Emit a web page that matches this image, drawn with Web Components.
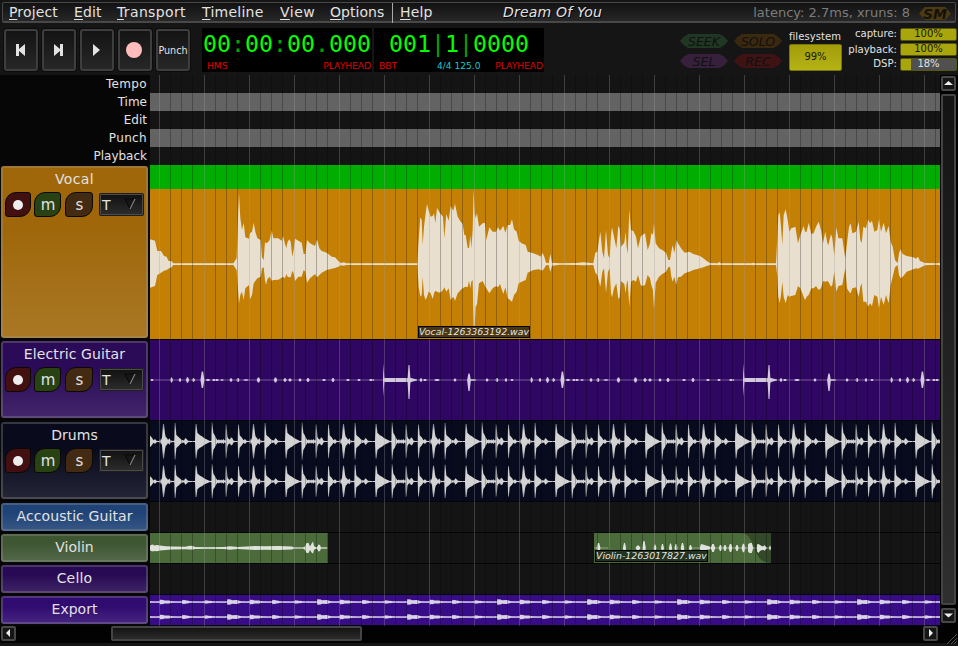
<!DOCTYPE html>
<html lang="en"><head><meta charset="utf-8"><title>Dream Of You</title>
<style>
html,body{margin:0;width:958px;height:646px;overflow:hidden;background:#151515}
body{font-family:"DejaVu Sans",sans-serif;color:#e2e2e2}
</style></head><body><daw-app></daw-app>
<script>
const def=(name,css,html)=>customElements.define(name,class extends HTMLElement{
  connectedCallback(){
    if(this.shadowRoot)return;
    const r=this.attachShadow({mode:'open'});
    const t=document.createElement('template');
    t.innerHTML='<style>*{box-sizing:border-box}:host{box-sizing:border-box;display:block}'+css+'</style>'+(typeof html==='function'?html(this):html);
    r.appendChild(t.content.cloneNode(true));
  }
});

/* ---------- waveform envelopes ---------- */
const quad=(ox,s)=>s.trim().split(/\s+/).map(p=>{const[x,t,b]=p.split(',').map(Number);return[x/3+ox,(t-252)/3,(b-252)/3]});
const vocal=[
...quad(0,`0,178,323 15,182,318 22,213,285 33,213,278 42,228,272 50,230,270 55,242,266 65,244,262 70,250,255 250,250,255 260,235,270 264,110,330 267,40,370 271,115,345 276,150,335 281,128,360 286,172,325 297,176,315 300,160,358 306,155,345 311,128,310 316,155,303 322,175,295 332,180,290 336,232,265 341,240,262 345,185,300 348,190,315 352,188,298 359,180,290 365,150,303 370,175,300 385,175,299 395,182,293 399,168,290 405,192,295 409,204,282 413,185,290 418,178,292 422,185,292 427,230,272 431,210,280 435,176,303 445,182,290 455,188,290 461,222,270 466,222,275 471,180,308 480,190,295 495,198,282 501,178,292 508,205,285 515,213,278 530,218,270 545,230,266 555,232,264 565,243,260 573,249,256 582,247,257 588,250,255`),
...quad(260,`22,250,255 26,180,320 31,112,350 35,120,345 38,195,290 42,140,345 47,100,360 51,72,350 56,92,335 62,110,340 68,108,357 72,100,340 76,130,332 81,84,335 90,100,338 99,110,330 103,175,322 109,102,335 116,122,325 122,78,360 130,92,350 135,72,362 143,110,340 152,125,330 158,132,325 163,165,322 167,165,320 173,203,322 177,205,303 181,165,325 184,205,305 188,150,300 191,30,440 194,100,440 197,115,380 201,100,372 207,140,310 218,130,303 225,128,318 229,180,325 238,142,340 248,155,325 258,155,318 264,142,322 270,152,312 280,138,342 286,158,322 293,135,355 300,135,360 306,118,365 312,148,345 320,155,335 326,182,310 335,190,305 347,195,300 353,215,278 370,220,270 385,226,268 393,230,270 397,218,272 403,230,265 408,248,256 416,250,255 421,222,275 426,248,257 450,250,254 500,249,255 520,247,256 550,250,255 556,218,278 562,215,285 567,180,305 571,155,320 577,215,275 582,235,265 588,150,338 594,225,275 599,235,265 603,165,340 606,142,352 612,170,325 619,205,310 625,138,358 629,145,352 633,200,303 643,188,312 647,155,340 650,200,310 653,222,300 658,90,380 663,150,305 670,153,300 678,170,305 684,205,285 692,170,315 697,165,318 705,160,315 713,210,285 720,190,295 724,158,315 729,165,330 732,130,388 737,190,308 747,205,290 757,210,282 768,218,275 775,240,262 780,240,260 784,215,290 788,195,305 793,220,290`),
...quad(520,`19,180,315 24,190,292 33,205,290 44,218,280 58,215,275 70,222,270 90,228,265 100,235,262 110,243,258 120,249,255 143,250,255 148,246,256 152,250,255 245,250,255 250,248,256 254,250,255 318,250,255 322,170,290 325,105,350 329,97,370 333,140,345 337,195,305 341,105,350 347,88,370 353,120,345 358,155,350 364,145,348 376,140,345 384,190,318 391,165,325 401,138,350 405,155,360 410,155,350 416,128,345 424,162,325 431,160,325 438,140,318 446,125,330 453,150,325 459,190,303 466,155,305 472,190,303 475,195,305 483,162,320 487,175,315 493,228,275 499,142,335 505,175,318 517,175,315 522,210,285 526,235,265 531,190,325 537,140,335 542,130,340 547,160,325 558,155,322 566,125,350 571,180,320 575,190,310 580,140,365 588,145,365 594,118,380 600,130,370 606,122,378 613,155,345 622,150,350 627,118,385 633,155,350 641,128,375 648,160,345 656,138,370 662,185,315 668,200,290 675,240,262 683,250,255 687,220,285 692,208,295 698,222,290 710,228,275 730,232,268 738,236,265 744,230,266 750,243,263 765,249,256 800,250,254 810,249,256`)];
const poly=(pts,cy)=>'M'+pts.map(p=>p[0].toFixed(2)+' '+(cy+p[1]).toFixed(2)).join('L')+'L'+pts.slice().reverse().map(p=>p[0].toFixed(2)+' '+(cy+p[2]).toFixed(2)).join('L')+'Z';
const blip=(x,up,dn,w,cy)=>`M${x-w} ${cy}L${x-w/3} ${cy-up}L${x+w/3} ${cy-up}L${x+w} ${cy}L${x+w/3} ${cy+dn}L${x-w/3} ${cy+dn}Z`;

const drumCycle=(cy,k)=>{
  const e=`10.4,3 11,1.4 12,4 13,18 14,18 15,8 15.8,4.6 17,3.5 18,1.6 19.5,3.3 20.5,1.2 22.5,.6 24.3,.8 24.7,19 25.5,19 26.3,7 27.6,5.4 29,4.4 30,3 32,1.5 34,1 35.3,3.7 36.6,2.5 38,.9 41,.6 45,.6 45.6,18 46.6,18 47.4,9 50,6.5 52,5.5 54,3.6 57,2 60,.5 61.4,.8 61.8,20 62.5,19 63.3,9 65,6 66.2,3.4 67.5,1.4 69,2.3 70,1 71.3,2.3 72,1 73.5,2.5 74.5,1 75.4,1.2 75.8,18 76.6,17 77.4,5 78.6,2.5 80,2 81,4.3 82.6,3.2 83.4,1 85,.6 87.6,.6 88.1,18 88.9,17 89.7,6.5 92,3.8 93.5,1.2 95,2.5 96.5,.8 98,.5 98.8,.6 99.5,2`.split(' ').map(p=>p.split(',').map(Number));
  let d='';
  for(let o=-90;o<800;o+=90)d+=poly(e.map(([x,h])=>[x+o,-Math.max(h*k,.4),Math.max(h*k*.98,.4)]),cy);
  return d;
};
const guitar=cy=>{
  let d='';
  const ev=[[373,.8,.8,1.5],[409,15,19,1.5],[421,1.8,1.8,1.6],[425,.9,.9,2],[437,1,1,3],[455,1.5,1.5,1.5],[469,6.5,11,1.9],[473,.8,.8,4],[487,1.4,1.4,1.7],[497,2,2,1.5],[506,1.8,1.8,1.4],[512,1,1,1.6],[531.5,2.5,2.5,1.5],[540,1.8,1.8,1.5],[547.5,2.7,2.7,1.7],[553.5,1.8,1.8,1.7],[562.4,8.5,8,2],[568,1.1,1.1,2.4],[574,1,1,2],[577,1,1,2],[582,.8,.8,2],[591,1.8,1.8,1.6],[598,1.9,1.9,1.6],[606,.8,.8,3],[618.5,2.5,2.5,1.9],[635.5,2.5,2.5,1.8],[645,1.8,1.8,1.8],[650,1.5,1.5,1.8],[660,1.6,1.6,1.6],[668,2,2,1.7],[684,1,1,2],[693,1.9,1.9,1.7],[708,1.1,1.1,2],[719,1.1,1.1,1.8],[731,1,1,2]];
  for(let o=-360;o<=360;o+=360){
    for(const[x,a,b,w]of ev)d+=blip(x-150+o,a,b,w,cy);
    d+=poly([[233,-.6,.6],[233.5,-17,17],[234,-7,7],[234.4,-2,2],[258,-2,2],[259,-3,3.5],[262,-1.8,1.8],[266,-.8,.8],[267,-.4,.4]].map(p=>[p[0]+o,p[1],p[2]]),cy);
  }
  return d;
};
const exportWave=cy=>{
  let d='';
  for(let o=-125.5;o<800;o+=90)for(const[x,h,w]of[[0,1.8,8],[22.5,3.1,14],[45,2.4,13],[67.5,2.2,8]])
    d+=poly([[x-2,-.7,.7],[x,-.7,.7],[x+.5,-h,h],[x+2,-h*.8,h*.8],[x+3,-h*.9,h*.9],[x+5,-h*.6,h*.6],[x+w*.7,-h*.65,h*.65],[x+w,-.8,.8],[x+22,-.5,.5]].map(p=>[p[0]+o,p[1],p[2]]),cy);
  return d;
};
const trail=(fill,cy,w=790,x=0)=>`<rect x="${x}" y="${cy-.5}" width="${w}" height="1" fill="${fill}" opacity=".45"/>`;
const svg=(h,s)=>`<svg width="790" height="${h}" viewBox="0 0 790 ${h}">${s}</svg>`;
const waves={
  vocal:()=>svg(150,`<path fill="#e8dfcf" d="${poly(vocal,75)}"/>`),
  guitar:()=>svg(80,trail('#c8bcd8',40)+`<path fill="#d2c9de" d="${guitar(40)}"/>`),
  drums:()=>svg(80,`<defs><linearGradient id="g" x1="0" y1="0" x2="0" y2="40" gradientUnits="userSpaceOnUse" spreadMethod="repeat"><stop offset="0" stop-color="#d2d2d2" stop-opacity=".4"/><stop offset=".25" stop-color="#d2d2d2"/><stop offset=".75" stop-color="#d2d2d2"/><stop offset="1" stop-color="#d2d2d2" stop-opacity=".4"/></linearGradient></defs>`+trail('#ccc',20.5)+trail('#ccc',60.5)+`<path fill="url(#g)" d="${drumCycle(20.5,.97)}${drumCycle(60.5,.88)}"/>`),
  export:()=>svg(30,trail('#d9d0ee',7)+trail('#d9d0ee',22)+`<path fill="#d9d2e6" d="${exportWave(7)}${exportWave(22)}"/>`),
  violin:()=>{
    const a=[[0,-2,2],[1,-3,3],[3,-3.5,3.5],[4,-2.5,3],[7,-3,3.2],[10,-2.4,2.6],[16,-1.8,2],[22,-1.4,1.5],[35,-1.2,1.2],[40,-2.2,1.4],[43,-2,1.4],[45,-1,1],[58,-.8,.8],[74,-1,1],[80,-1.7,1.7],[88,-1,1],[97,-1.4,1.6],[105,-2,2],[115,-1.8,1.8],[128,-2,2],[142,-1.6,1.6],[144,-.5,.5],[153,-.4,.4],[155,-1.5,2],[156.5,-5,5],[158.5,-5,5],[160,-1.5,2],[162,-5,5],[163,-6.5,5.5],[164,-2,2],[165,-1,1],[167,-.8,.8],[168.5,-3.5,3.5],[170,-3,3],[171,-.5,.5],[177,-.4,.4]];
    let d=poly(a,15);
    for(const[x,h,w]of[[598.5,5,2],[624.5,5,1.6],[638,2.5,2.5],[644,7,1.8],[655,3.5,1.4],[662.5,4,1.5],[670.5,4.5,1.6],[676,4,1.5],[682.5,5,1.8],[690.5,3,1.6],[713,4,2.3],[720.5,3,1.8],[725,3,1.7],[730.5,4,2],[737,3,1.8],[743.5,4.2,2],[751,5,2.3],[764.5,2.5,1.8],[770,2.3,1]])d+=blip(x-150,h,h,w,15);
    d+=poly([[550,-1,1],[551,-4,4],[553,-3.6,4],[556,-2.4,2],[559,-1.8,1.5],[561,-.5,.5]],15)+poly([[598,-3.5,3.5],[599.5,-5,5],[601.5,-3.5,3.5],[603,-.5,.5]],15)+poly([[607,-3.5,3.5],[608.5,-4,5],[610,-3,3],[612,-1.8,2],[615,-1.8,2],[617,-.5,.5]],15);
    return svg(30,`<path fill="#4c6b3b" d="M0 0H178V30H0ZM444 0H621V30H444Z"/><path fill="#33492a" d="M590 0C608 0 600 30 621 30V0Z"/>`+trail('#dde3d8',15,178)+trail('#dde3d8',15,14,444)+trail('#dde3d8',15,80,541)+`<path fill="#e0e3dc" d="${d}"/>`);
  }
};

/* ---------- menu and transport ---------- */
def('menu-item',`:host{position:relative;width:var(--w);font-size:14px;letter-spacing:var(--ls,.15px);line-height:19px;white-space:nowrap}u{text-decoration-thickness:1px;text-underline-offset:2px;text-decoration-skip-ink:none}:host([divided])::before{content:"";position:absolute;left:-8px;top:0;height:20px;width:1px;background:#aaa}`,
  e=>`<u>${e.getAttribute('label')[0]}</u>${e.getAttribute('label').slice(1)}`);
def('menu-bar',`:host{display:flex;height:21px;margin:2px 2px 0 2px;padding:0 4px 0 6px;border:1px solid #484848;border-width:1px 1px 2px;border-radius:2px;background:linear-gradient(#121212,#272727);position:relative;width:954px}
.title{font-size:14px;line-height:19px;font-style:italic;margin-left:53px;letter-spacing:.2px;width:101px;white-space:nowrap;text-shadow:1px 1px 0 #000}.lat{margin-left:auto;font-size:13px;line-height:20px;color:#7c7c7c;white-space:nowrap}.sm{margin-left:9px;margin-top:4px;width:32px;height:13px;background:#4c3a12;clip-path:polygon(0 50%,18% 0,82% 0,100% 50%,82% 100%,18% 100%);color:#15120a;font:italic bold 14px/14px "DejaVu Sans";text-align:center}`,
`<menu-item label="Project" style="--w:65px"></menu-item><menu-item label="Edit" style="--w:43px"></menu-item><menu-item label="Transport" style="--w:85px;--ls:.35px"></menu-item><menu-item label="Timeline" style="--w:78px;--ls:.25px"></menu-item><menu-item label="View" style="--w:50px;--ls:.5px"></menu-item><menu-item label="Options" style="--w:70px;--ls:.05px"></menu-item><menu-item label="Help" divided style="--w:50px"></menu-item><span class="title">Dream Of You</span><span class="lat">latency: 2.7ms, xruns: 8</span><span class="sm">SM</span>`);
def('transport-button',`:host{width:34px;height:42px;border:2px solid #3e3e3e;border-radius:3px;background:linear-gradient(#141414,#272727);display:flex;align-items:center;justify-content:center;font-size:9.6px;box-shadow:0 0 0 1px #0c0c0c}svg{display:block;position:relative;top:-1px;filter:drop-shadow(1px 1px 0 #000)}`,'<slot></slot>');
def('clock-display',`:host{width:170px;height:44px;background:#000;padding:1px 1px 0 1px}.t{font:23.25px/30px "DejaVu Sans Mono",monospace;color:#0f0;text-align:center;white-space:nowrap}.t i{font-style:normal;color:#00a800}.b{display:flex;justify-content:space-between;font-size:9.1px;line-height:14px;color:#e00000;padding:0 0 0 4px}.b b{font-weight:400;color:#1cc}.b span+b{margin-left:25px}`,
 e=>`<div class="t">${e.getAttribute('time').replace(/[:.|]/g,'<i>$&</i>')}</div><div class="b"><span>${e.getAttribute('mode')}</span>${e.hasAttribute('tempo')?`<b>${e.getAttribute('tempo')}</b>`:''}<span>PLAYHEAD</span></div>`);
def('status-pill',`:host{width:48px;height:14px;background:var(--c);clip-path:polygon(0 50%,7% 22%,17% 0,83% 0,93% 22%,100% 50%,93% 78%,83% 100%,17% 100%,7% 78%);font:italic 12.5px/15px "DejaVu Sans";text-align:center;color:#111}`,'<slot></slot>');
def('level-meter',`:host{height:13px;border:1px solid #565610;border-radius:2px;background:linear-gradient(90deg,#a9a50c var(--v),#505050 var(--v));font-size:10px;line-height:10px;text-align:center;color:var(--t,#181800)}:host([big]){height:27px;width:53px;line-height:24px;border-color:#77750c;background:linear-gradient(#a39d0a,#b5b315)}`,'<slot></slot>');
def('transport-bar',`:host{display:flex;height:52px;padding-top:5px}.btns{display:flex;gap:4px;padding:1px 0 0 4px}.clocks{display:flex;gap:2px;margin-left:12px}.pills{display:grid;grid-template-columns:48px 48px;gap:6px 6px;grid-auto-rows:14px;margin:6px 0 0 136px;height:34px;width:103px}.fs{margin:2px 0 0 6px;width:53px;font-size:10px;line-height:13px;text-align:center;white-space:nowrap}.fs span{display:block;letter-spacing:.08px;margin-left:-1px}.fs level-meter{margin-top:1px}.meters{margin-left:1px;display:grid;grid-template-columns:54px 57px;gap:2px 3px;grid-auto-rows:13px;font-size:10.1px;line-height:11px;text-align:right;height:44px;align-content:start}`,
`<div class="btns">
<transport-button><svg width="12" height="14"><path fill="#e2e2e2" d="M1 1H4V6L10 1V13L4 8V13H1Z"/></svg></transport-button>
<transport-button><svg width="12" height="14"><path fill="#e2e2e2" d="M1 1L7 6V1H10V13H7V8L1 13Z"/></svg></transport-button>
<transport-button><svg width="12" height="14"><path fill="#e2e2e2" d="M2 1L9 7L2 13Z"/></svg></transport-button>
<transport-button><svg width="20" height="18"><circle cx="9" cy="9" r="8" fill="#ffbcbc"/></svg></transport-button>
<transport-button>Punch</transport-button></div>
<div class="clocks"><clock-display time="00:00:00.000" mode="HMS"></clock-display><clock-display time="001|1|0000" mode="BBT" tempo="4/4 125.0"></clock-display></div>
<div class="pills"><status-pill style="--c:#203724">SEEK</status-pill><status-pill style="--c:#3a280f">SOLO</status-pill><status-pill style="--c:#37203c">SEL</status-pill><status-pill style="--c:#3f1213">REC</status-pill></div>
<div class="fs"><span>filesystem</span><level-meter big>99%</level-meter></div>
<div class="meters"><span>capture:</span><level-meter style="--v:100%">100%</level-meter><span style="padding-top:1px">playback:</span><level-meter style="--v:100%">100%</level-meter><span>DSP:</span><level-meter style="--v:18%;--t:#e2e2e2">18%</level-meter></div>`);

/* ---------- tracks ---------- */
def('track-header',`:host{width:147px;margin-left:1px;border:2px solid;border-color:#a0a0a04d;border-radius:3px;background-clip:border-box;background-color:var(--c);background-image:linear-gradient(#fff0 35%,#ffffff1c);background-origin:border-box;box-shadow:0 0 0 1px #080808}.n{font-size:14px;line-height:22px;height:23px;text-align:center;white-space:nowrap;letter-spacing:var(--ls,0)}
.c{display:flex;padding-left:2px;height:27px;align-items:center}.k{width:26px;height:25px;border:1px solid #0b0805;border-radius:11px 3px 11px 3px;text-align:center;font-size:15px;line-height:24px;margin-right:3px}.r{background:#421010;display:flex;align-items:center;justify-content:center}.r::before{content:"";width:10px;height:10px;border-radius:50%;background:#eee}.m{background:#294214;width:27px;padding-left:1px}.s{background:#432a12;margin-left:1px;width:28px;padding-left:1px}.d{margin-left:3px;width:45px;height:23px;border:2px solid #4b4b4b;outline:1px solid #0009;outline-offset:-1px;border-radius:2px;background:linear-gradient(#121212,#2b2b2b);display:flex;font-size:14px;line-height:20px;padding-left:1px;align-items:center}.d svg{margin-left:13px;margin-top:-1px}`,
 e=>`<div class="n">${e.getAttribute('name')}</div>${e.hasAttribute('controls')?`<div class="c"><span class="k r"></span><span class="k m">m</span><span class="k s">s</span><span class="d">T<svg width="13" height="12"><path d="M1 1H11L6 11Z" fill="#161616"/><path d="M11 1H1L6 11" stroke="#060606" fill="none"/><path d="M11 1L6 11" stroke="#999"/></svg></span></div>`:''}`);
def('ruler-label',`:host{height:18px;font-size:12px;line-height:18px;text-align:right;padding-right:3px}`,'<slot></slot>');
def('track-panel',`:host{width:150px;background:#060606}.rulers{height:90px}.stack{display:flex;flex-direction:column}`,
`<div class="rulers"><ruler-label style="letter-spacing:.35px">Tempo</ruler-label><ruler-label>Time</ruler-label><ruler-label>Edit</ruler-label><ruler-label style="letter-spacing:.35px">Punch</ruler-label><ruler-label>Playback</ruler-label></div><div class="stack">
<track-header controls name="Vocal" style="--c:#9f670a;height:172px;margin-top:1px;--ls:.4px"></track-header>
<track-header controls name="Electric Guitar" style="--c:#2b0b58;height:77px;margin-top:3px;--ls:.1px"></track-header>
<track-header controls name="Drums" style="--c:#090b1d;height:77px;margin-top:4px"></track-header>
<track-header name="Accoustic Guitar" style="--c:#1f4377;height:28px;margin-top:4px;--ls:.1px"></track-header>
<track-header name="Violin" style="--c:#3f5633;height:28px;margin-top:3px"></track-header>
<track-header name="Cello" style="--c:#280a54;height:28px;margin-top:3px;--ls:.2px"></track-header>
<track-header name="Export" style="--c:#300b70;height:28px;margin-top:3px"></track-header></div>`);
def('region-label',`:host{position:absolute;left:var(--x);top:var(--y);height:12px;border:1px solid #000;background:var(--b);font:italic 9.4px/10px "DejaVu Sans";padding:0;white-space:nowrap;color:#e6e6e6}`,'<slot></slot>');
def('wave-lane',`:host{background:var(--c,#141414);height:var(--h);border-bottom:1px solid #050505;overflow:hidden}svg{display:block}`,
 e=>(waves[e.getAttribute('wave')]||(()=>''))()+'<slot></slot>');
def('time-canvas',`:host{position:relative;width:790px;height:551px;overflow:hidden;background:#141414}.row{height:18px}.g{background:#636363}.top{height:24px;background:#00ad00}
.grid{position:absolute;inset:0;background:repeating-linear-gradient(90deg,#a0a0a04d 0 1px,#0000 1px 11px,#00000044 11px 12px,#0000 12px 22px,#00000044 22px 23px,#0000 23px 33px,#00000044 33px 34px,#0000 34px 45px);background-position:9px 0;background-size:45px 100%}`,
`<div class="row"></div><div class="row g"></div><div class="row"></div><div class="row g"></div><div class="row"></div><div class="top"></div>
<wave-lane wave="vocal" style="--c:#c48005;--h:151px"></wave-lane>
<wave-lane wave="guitar" style="--c:#300663;--h:81px"></wave-lane>
<wave-lane wave="drums" style="--c:#080a1d;--h:81px"></wave-lane>
<wave-lane style="--h:31px"></wave-lane>
<wave-lane wave="violin" style="--h:31px"></wave-lane>
<wave-lane style="--h:31px"></wave-lane>
<wave-lane wave="export" style="--c:#390c87;--h:31px"></wave-lane>
<div class="grid"></div>
<region-label style="--x:268px;--y:251px;--b:#4b3610">Vocal-1263363192.wav</region-label>
<region-label style="--x:445px;--y:475px;--b:#24331f">Violin-1263017827.wav</region-label>`);

/* ---------- scrollbars ---------- */
def('scroll-arrow',`:host{width:15px;height:15px;border:2px solid #484848;border-radius:2px;background:#161616;flex:none}svg{display:block}`,
 e=>`<svg width="11" height="11"><path fill="#eee" d="${{up:'M1 7L5.5 3L10 7Z',down:'M1 3.5L5.5 7.5L10 3.5Z',left:'M7 1L3 5L7 9Z',right:'M4 1L8 5L4 9Z'}[e.getAttribute('dir')]}"/></svg>`);
def('scroll-track',`:host{display:flex;background:#020202}.thumb{border:2px solid #444;border-radius:2px;background:linear-gradient(#141414,#2b2b2b)}
:host([vertical]){flex-direction:column;width:18px;height:551px;padding:1px 0 0 1px}:host([vertical]) .thumb{width:15px;height:511px;margin:3px 0;background:linear-gradient(#141414,#2f2f2f)}
:host([horizontal]){width:940px;height:17px;padding:0 0 0 1px}:host([horizontal]) .thumb{width:251px;height:15px;margin:0 561px 0 95px}`,
 e=>e.hasAttribute('vertical')?`<scroll-arrow dir="up"></scroll-arrow><div class="thumb"></div><scroll-arrow dir="down"></scroll-arrow>`:`<scroll-arrow dir="left"></scroll-arrow><div class="thumb"></div><scroll-arrow dir="right"></scroll-arrow>`);
def('daw-app',`:host{width:958px;height:646px;background:#151515;overflow:hidden;display:flow-root}.main{display:grid;grid-template-columns:150px 790px 18px;height:551px}.bottom{display:flex;height:20px}.grip{display:block}`,
`<menu-bar></menu-bar><transport-bar></transport-bar><div class="main"><track-panel></track-panel><time-canvas></time-canvas><scroll-track vertical></scroll-track></div><div class="bottom"><scroll-track horizontal></scroll-track><svg class="grip" width="18" height="20"><path fill="#020202" d="M0 0H18V17H0Z"/><path stroke="#555" d="M7 18L17 8M11 18L17 12M14 18L17 15"/></svg></div>`);
</script></body></html>
